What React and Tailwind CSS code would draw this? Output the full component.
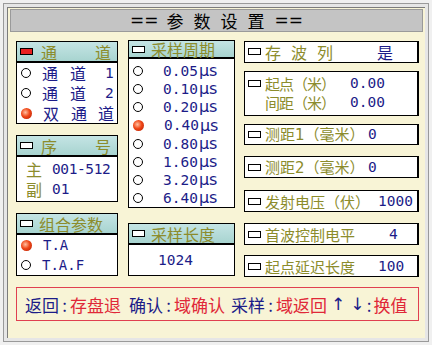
import React from 'react';

const Box = ({ red }) => (
  <span className={`inline-block w-[13px] h-[7px] border border-black shrink-0 ${red ? 'bg-[#e82020]' : 'bg-white'}`} />
);

const Radio = ({ on }) =>
  on ? (
    <span className="inline-block w-[11px] h-[11px] rounded-full shrink-0 bg-[radial-gradient(circle_at_40%_40%,#ffc0a0_0%,#f04818_45%,#b01800_100%)]" />
  ) : (
    <span className="inline-block w-[10px] h-[10px] rounded-full border-[1.5px] border-black bg-white shrink-0" />
  );

const Panel = ({ className, head, children }) => (
  <div className={`border border-black bg-white flex flex-col ${className}`}>
    <div className="h-[21px] bg-[linear-gradient(#c4e4e4,#a8d4d0)] border-b-2 border-black flex items-center pl-[3px] pr-[6px] gap-[6px] text-[#8c8c2c] text-[16px] leading-none whitespace-nowrap">
      {head}
    </div>
    {children}
  </div>
);

// one line field on the right: label width sets where the value starts
const Field = ({ className, label, w, value }) => (
  <div className={`border border-black border-r-2 bg-white flex items-center pl-[3px] gap-[4px] leading-none whitespace-nowrap ${className}`}>
    <Box />
    <span className={`text-[#8c8c2c] text-[15px] shrink-0 ${w}`}>{label}</span>
    <span className={mono}>{value}</span>
  </div>
);

const mono = "font-['DejaVu_Sans_Mono',monospace] text-[#1c1c88] text-[14.5px] whitespace-nowrap";
const sym = "font-['DejaVu_Sans',sans-serif]";

export default function App() {
  const periods = ['0.05', '0.10', '0.20', '0.40', '0.80', '1.60', '3.20', '6.40'];
  return (
    <div className="w-[432px] h-[345px] bg-[#f0f0f0] p-[3px] font-['Noto_Sans_CJK_SC',sans-serif]">
      <div className="w-[426px] h-[339px] border border-[#9a9a9a] bg-[#e6e6e6] p-[3px]">
        <div className="h-full border-l border-t border-[#7c7c7c] bg-[#f8f4d6] pt-[1px] px-[2px]">
          {/* title */}
          <div className="h-[23px] bg-[#c4c4c4] border border-[#9a9a9a] flex items-center justify-center text-[17px] leading-none text-black">
            <span className={`${sym} mr-[8px]`}>==</span>
            <span className="tracking-[10px]">参数设置</span>
            <span className={sym}>==</span>
          </div>

          <div className="flex pl-[6px] mt-[8px] h-[237px]">
            {/* left column */}
            <div className="w-[102px] flex flex-col">
              <Panel className="h-[83px] mt-[1px]" head={<><Box red /><span className="flex-1 flex justify-between pl-[2px]"><span>通</span><span>道</span></span></>}>
                <div className="flex flex-col text-[#1c1c88] text-[16px] leading-none">
                  <div className="h-[20px] flex items-center pl-[4px]">
                    <Radio />
                    <span className="ml-[11px] w-[28px]">通</span>
                    <span className="w-[35px]">道</span>
                    <span className={mono}>1</span>
                  </div>
                  <div className="h-[20px] flex items-center pl-[4px]">
                    <Radio />
                    <span className="ml-[11px] w-[28px]">通</span>
                    <span className="w-[35px]">道</span>
                    <span className={mono}>2</span>
                  </div>
                  <div className="h-[20px] flex items-center pl-[4px]">
                    <Radio on />
                    <span className="ml-[11px] w-[28px]">双</span>
                    <span className="w-[27px]">通</span>
                    <span>道</span>
                  </div>
                </div>
              </Panel>

              <Panel className="h-[67px] mt-[11px]" head={<><Box /><span className="flex-1 flex justify-between pl-[2px]"><span>序</span><span>号</span></span></>}>
                <div className="flex flex-col pt-[2px] text-[16px] leading-none">
                  <div className="h-[20px] flex items-center pl-[9px]">
                    <span className="text-[#8c8c2c] w-[26px]">主</span>
                    <span className={`${mono} tracking-[-0.4px]`}>001-512</span>
                  </div>
                  <div className="h-[20px] flex items-center pl-[9px]">
                    <span className="text-[#8c8c2c] w-[26px]">副</span>
                    <span className={mono}>01</span>
                  </div>
                </div>
              </Panel>

              <Panel className="h-[63px] mt-[11px]" head={<><Box /><span>组合参数</span></>}>
                <div className="flex flex-col text-[16px] leading-none">
                  {[['T.A', true], ['T.A.F', false]].map(([t, on]) => (
                    <div key={t} className="h-[20px] flex items-center pl-[4px]">
                      <Radio on={on} />
                      <span className={`${mono} ml-[11px] text-[14px]`}>{t}</span>
                    </div>
                  ))}
                </div>
              </Panel>
            </div>

            {/* middle column */}
            <div className="w-[107px] ml-[10px] flex flex-col">
              <Panel className="h-[168px]" head={<><Box /><span>采样周期</span></>}>
                <div className="flex flex-col pt-[3px] leading-none">
                  {periods.map((p) => (
                    <div key={p} className="h-[18.2px] flex items-center pl-[4px]">
                      <Radio on={p === '0.40'} />
                      <span className={`${mono} ml-[20px]`}>{p}</span>
                      <span className={`${sym} text-[#1c1c88] text-[16px] ml-[1px]`}>µs</span>
                    </div>
                  ))}
                </div>
              </Panel>
              <Panel className="h-[53px] mt-[15px]" head={<><Box /><span>采样长度</span></>}>
                <div className="flex-1 flex items-center pl-[29px] leading-none">
                  <span className={mono}>1024</span>
                </div>
              </Panel>
            </div>

            {/* right column */}
            <div className="w-[175px] ml-[9px] flex flex-col">
              <div className="h-[22px] mt-[1px] border border-black border-r-2 bg-white flex items-center pl-[3px] gap-[4px] leading-none">
                <Box />
                <span className="text-[#8c8c2c] text-[16px] tracking-[10px] w-[108px] shrink-0">存波列</span>
                <span className="text-[#1c1c88] text-[16px]">是</span>
              </div>
              <div className="h-[45px] mt-[8px] border border-black border-r-2 bg-white flex flex-col justify-center pl-[3px] leading-none">
                <div className="h-[19px] flex items-center gap-[4px]">
                  <Box />
                  <span className="text-[#8c8c2c] text-[15px] tracking-[-1px] w-[81px] shrink-0 whitespace-nowrap">起点（米）</span>
                  <span className={mono}>0.00</span>
                </div>
                <div className="h-[19px] flex items-center gap-[4px]">
                  <span className="w-[13px] shrink-0" />
                  <span className="text-[#8c8c2c] text-[15px] tracking-[-1px] w-[81px] shrink-0 whitespace-nowrap">间距（米）</span>
                  <span className={mono}>0.00</span>
                </div>
              </div>
              <Field className="h-[22px] mt-[8px]" w="w-[99px]" label={<>测距<span className={sym}>1</span>（毫米）</>} value="0" />
              <Field className="h-[22px] mt-[11px]" w="w-[99px]" label={<>测距<span className={sym}>2</span>（毫米）</>} value="0" />
              <Field className="h-[22px] mt-[12px]" w="w-[109px]" label="发射电压（伏）" value="1000" />
              <Field className="h-[22px] mt-[11px]" w="w-[120px]" label="首波控制电平" value="4" />
              <Field className="h-[22px] mt-[10px]" w="w-[109px]" label="起点延迟长度" value="100" />
            </div>
          </div>

          {/* bottom help bar */}
          <div className="ml-[6px] w-[403px] h-[34px] mt-[10px] border border-[#e04050] flex items-center pl-[8px] text-[17px] leading-none whitespace-nowrap">
            <span className="text-[#1c1c88]">返回</span>
            <span className="text-[#1c1c88] w-[11px] text-center">:</span>
            <span className="text-[#e02838]">存盘退</span>
            <span className="text-[#1c1c88] ml-[8px]">确认</span>
            <span className="text-[#1c1c88] w-[11px] text-center">:</span>
            <span className="text-[#e02838]">域确认</span>
            <span className="text-[#1c1c88] ml-[6px]">采样</span>
            <span className="text-[#1c1c88] w-[11px] text-center">:</span>
            <span className="text-[#e02838]">域返回</span>
            <span className={`${sym} text-[#1c1c88] ml-[4px]`}>↑</span>
            <span className={`${sym} text-[#1c1c88] ml-[5px]`}>↓</span>
            <span className="text-[#1c1c88] w-[9px] text-center">:</span>
            <span className="text-[#e02838]">换值</span>
          </div>
        </div>
      </div>
    </div>
  );
}
